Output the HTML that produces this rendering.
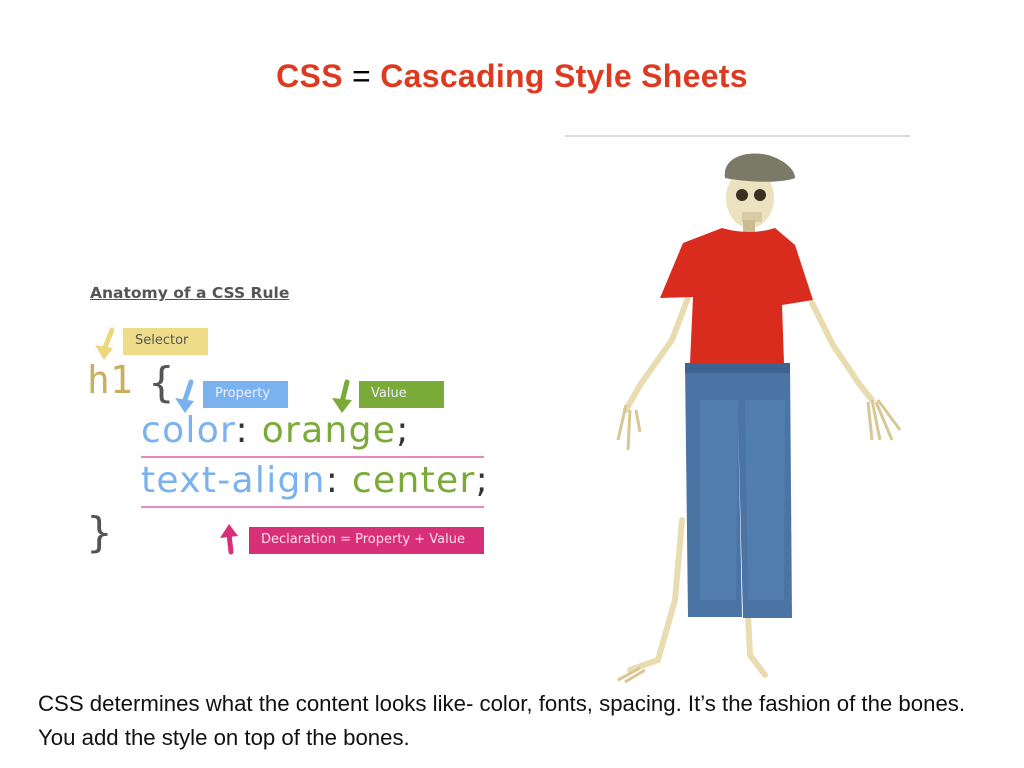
<!DOCTYPE html>
<html><head><meta charset="utf-8"><style>
body{margin:0;width:1024px;height:768px;background:#fff;position:relative;overflow:hidden;font-family:"Liberation Sans",sans-serif}
.a{position:absolute;white-space:nowrap}
.t{left:0;width:1024px;text-align:center;top:58px;font-size:32px;font-weight:bold;color:#dc3b22;letter-spacing:0.3px}
.t span{color:#000;font-weight:normal}
.code{font-family:"DejaVu Sans",sans-serif;font-size:36px;letter-spacing:1.3px}
.lbl{position:absolute;font-family:"DejaVu Sans",sans-serif;font-size:13px;padding-left:12px;line-height:26px;box-sizing:border-box}
.bt{left:38px;font-size:22.2px;color:#111}
</style></head><body>
<div class="a t">CSS <span>=</span> Cascading Style Sheets</div>
<div class="a" style="left:90px;top:284px;font-family:'DejaVu Sans',sans-serif;font-weight:bold;font-size:15.5px;color:#555;text-decoration:underline">Anatomy of a CSS Rule</div>

<div class="lbl" style="left:123px;top:328px;width:85px;height:27px;background:#eedd88;color:#555">Selector</div>
<div class="lbl" style="left:203px;top:381px;width:85px;height:27px;background:#7ab2f0;color:#eef">Property</div>
<div class="lbl" style="left:359px;top:381px;width:85px;height:27px;background:#7aab38;color:#eef">Value</div>
<div class="lbl" style="left:249px;top:527px;width:235px;height:27px;background:#d83078;color:#fde">Declaration = Property + Value</div>

<div class="a" style="left:87px;top:358px;font-family:'DejaVu Sans Mono',monospace;font-size:38px;color:#c8b060">h1</div>
<div class="a" style="left:148px;top:358px;font-family:'DejaVu Sans',sans-serif;font-size:42px;color:#555">{</div>
<div class="a code" style="left:141px;top:410px;color:#7ab2f0">color<span style="color:#333">:</span> <span style="color:#7aab38">orange</span><span style="color:#333">;</span></div>
<div class="a code" style="left:141px;top:460px;color:#7ab2f0">text-align<span style="color:#333">:</span> <span style="color:#7aab38">center</span><span style="color:#333">;</span></div>
<div class="a" style="left:86px;top:508px;font-family:'DejaVu Sans',sans-serif;font-size:42px;color:#555">}</div>
<div class="a" style="left:141px;top:456px;width:343px;height:2px;background:#e888c0"></div>
<div class="a" style="left:141px;top:506px;width:343px;height:2px;background:#e888c0"></div>

<svg class="a" style="left:0;top:0" width="1024" height="768">
<g stroke-linecap="round">
<line x1="112" y1="330" x2="104" y2="350" stroke="#eed77a" stroke-width="5"/><polygon points="95,345 104,360 113,348" fill="#eed77a"/>
<line x1="191" y1="382" x2="184" y2="403" stroke="#7ab2f0" stroke-width="5"/><polygon points="175,398 185,413 194,401" fill="#7ab2f0"/>
<line x1="347" y1="382" x2="342" y2="402" stroke="#7aab38" stroke-width="5"/><polygon points="332,398 342,413 352,400" fill="#7aab38"/>
<line x1="231" y1="552" x2="229" y2="534" stroke="#d83078" stroke-width="5"/><polygon points="220,538 229,524 238,536" fill="#d83078"/>
</g>
<line x1="565" y1="136" x2="910" y2="136" stroke="#ddd" stroke-width="2"/>
<g stroke="#e8dcb0" stroke-width="6" fill="none" stroke-linecap="round">
<path d="M688,298 L672,340 L640,385 L626,410"/>
<path d="M812,303 L833,345 L860,385 L872,400"/>
<path d="M682,520 L675,600 L658,660 L630,670"/>
<path d="M748,615 L750,655 L765,675"/>
</g>
<g stroke="#d8c896" stroke-width="3" fill="none">
<path d="M626,405 L618,440 M630,410 L628,450 M636,410 L640,432"/>
<path d="M872,400 L880,440 M876,402 L892,440 M878,400 L900,430 M868,402 L872,440"/>
<path d="M640,668 L618,680 M645,670 L625,682"/>
</g>
<ellipse cx="750" cy="198" rx="24" ry="30" fill="#ece2c0"/>
<ellipse cx="742" cy="195" rx="6" ry="6" fill="#3a3020"/>
<ellipse cx="760" cy="195" rx="6" ry="6" fill="#3a3020"/>
<rect x="742" y="212" width="20" height="10" fill="#d8cca8"/>
<rect x="743" y="220" width="12" height="14" fill="#ccbb90"/>
<path d="M725,178 C722,158 745,150 768,155 C785,160 795,170 795,178 C780,184 745,182 725,178Z" fill="#7b7a66"/>
<path d="M722,228 Q750,236 775,228 L795,245 L813,300 L782,305 L784,363 L690,363 L693,297 L660,298 L683,243Z" fill="#d92c1e"/>
<path d="M685,363 L790,363 L792,618 L743,618 L738,420 L742,617 L688,617 Z" fill="#4a74a4"/>
<path d="M700,400 L738,400 L736,600 L700,600Z" fill="#5a88b8" opacity=".5"/>
<path d="M745,400 L785,400 L784,600 L748,600Z" fill="#5a88b8" opacity=".5"/>
<rect x="685" y="363" width="105" height="10" fill="#3e6390"/>
</svg>

<div class="a bt" style="top:691px">CSS determines what the content looks like- color, fonts, spacing. It’s the fashion of the bones.</div>
<div class="a bt" style="top:725px">You add the style on top of the bones.</div>
</body></html>
